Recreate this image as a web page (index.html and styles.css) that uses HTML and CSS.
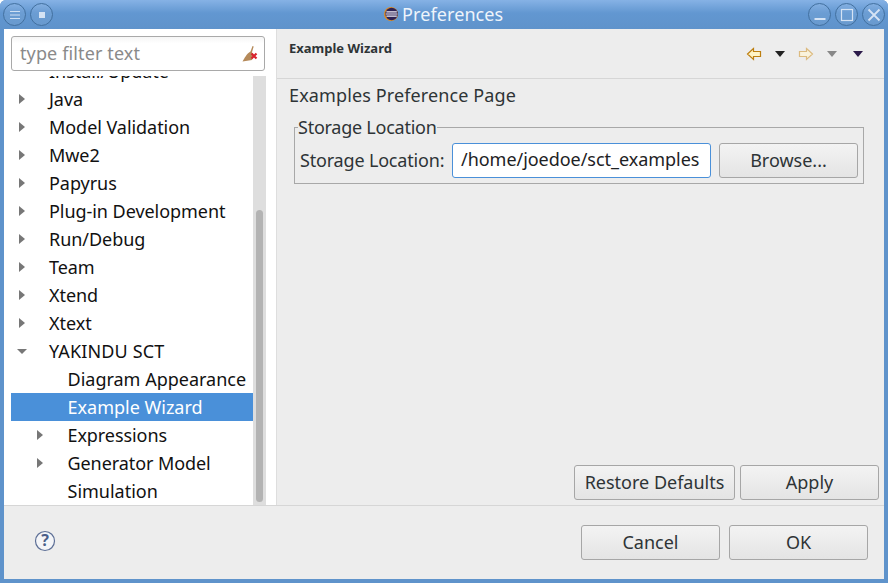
FILE: index.html
```html
<!DOCTYPE html>
<html lang="en">
<head>
<meta charset="utf-8">
<title>Preferences</title>
<link rel="stylesheet" href="styles.css">
</head>
<body>
<div class="window">
  <header class="titlebar">
    <div class="wm-group">
      <span class="wm-btn"><svg width="14" height="12" viewBox="0 0 14 12"><path d="M2 2.5h10M2 6h10M2 9.500h10" stroke="#cfe0f3" stroke-width="1.200" fill="none"/></svg></span>
      <span class="wm-btn"><svg width="14" height="14" viewBox="0 0 14 14"><rect x="4" y="4" width="6" height="6" fill="#d5e3f4"/></svg></span>
    </div>
    <div class="title">
      <svg class="eclipse" width="14" height="14" viewBox="0 0 14 14"><circle cx="7" cy="7" r="7" fill="#e08a1e"/><circle cx="7.600" cy="7" r="6.200" fill="#2c2255"/><path d="M2.400 4.800h10.400M1.800 7h11.600M2.400 9.200h10.400" stroke="#f2f0f7" stroke-width="1.200"/></svg>
      <span>Preferences</span>
    </div>
    <div class="wm-group">
      <span class="wm-btn"><svg width="14" height="14" viewBox="0 0 14 14"><path d="M1.500 11h11" stroke="#d5e3f4" stroke-width="2"/></svg></span>
      <span class="wm-btn"><svg width="14" height="14" viewBox="0 0 14 14"><rect x="1.500" y="1.500" width="11" height="11" fill="none" stroke="#d5e3f4" stroke-width="1.200"/></svg></span>
      <span class="wm-btn"><svg width="14" height="14" viewBox="0 0 14 14"><path d="M1.500 1.500l11 11M12.500 1.500l-11 11" stroke="#d5e3f4" stroke-width="1.800"/></svg></span>
    </div>
  </header>
  <div class="body">
    <div class="main">
      <aside class="left">
        <div class="filter">
          <span class="filter-text">type filter text</span>
          <svg class="broom" width="18" height="18" viewBox="0 0 18 18"><path d="M11.500 1l1.200.5-1.800 6 1.600 1.500-1.500 6-9.500 1.500c2-3 4-8 8-10z" fill="#b58a5a"/><path d="M10.500 8.500l5 5M15.500 8.500l-5 5" stroke="#d9232e" stroke-width="2.200"/></svg>
        </div>
        <div class="tree-wrap">
          <ul class="tree">
            <li class="row"><span class="lvl1 twist closed"></span><span>Install/Update</span></li>
            <li class="row"><span class="lvl1 twist closed"></span><span>Java</span></li>
            <li class="row"><span class="lvl1 twist closed"></span><span>Model Validation</span></li>
            <li class="row"><span class="lvl1 twist closed"></span><span>Mwe2</span></li>
            <li class="row"><span class="lvl1 twist closed"></span><span>Papyrus</span></li>
            <li class="row"><span class="lvl1 twist closed"></span><span>Plug-in Development</span></li>
            <li class="row"><span class="lvl1 twist closed"></span><span>Run/Debug</span></li>
            <li class="row"><span class="lvl1 twist closed"></span><span>Team</span></li>
            <li class="row"><span class="lvl1 twist closed"></span><span>Xtend</span></li>
            <li class="row"><span class="lvl1 twist closed"></span><span>Xtext</span></li>
            <li class="row"><span class="lvl1 twist open"></span><span>YAKINDU SCT</span></li>
            <li class="row"><span class="lvl2 twist"></span><span>Diagram Appearance</span></li>
            <li class="row selected"><span class="lvl2 twist"></span><span>Example Wizard</span></li>
            <li class="row"><span class="lvl2 twist closed"></span><span>Expressions</span></li>
            <li class="row"><span class="lvl2 twist closed"></span><span>Generator Model</span></li>
            <li class="row"><span class="lvl2 twist"></span><span>Simulation</span></li>
          </ul>
          <div class="scrollbar"><div class="thumb"></div></div>
        </div>
      </aside>
      <section class="right">
        <div class="page-head">
          <span class="page-title">Example Wizard</span>
          <div class="nav">
            <svg width="16" height="14" viewBox="0 0 16 14"><path d="M7.500 1.500L1.500 7l6 5.500V9.500h7v-5h-7z" fill="#fff3c4" stroke="#bd7f10" stroke-width="1.200"/></svg>
            <span class="tri dark nav-gap1"></span>
            <svg class="nav-gap2" width="16" height="14" viewBox="0 0 16 14"><path d="M8.500 1.500L14.500 7l-6 5.500V9.500h-7v-5h7z" fill="#faf3dc" stroke="#dcbb80" stroke-width="1.200"/></svg>
            <span class="tri grey nav-gap3"></span>
            <span class="tri purple nav-gap4"></span>
          </div>
        </div>
        <div class="page-body">
          <h1 class="page-heading">Examples Preference Page</h1>
          <fieldset class="group">
            <legend>Storage Location</legend>
            <div class="field-row">
              <label class="field-label">Storage Location:</label>
              <div class="input">/home/joedoe/sct_examples</div>
              <button class="btn browse">Browse...</button>
            </div>
          </fieldset>
          <div class="page-actions">
            <button class="btn restore">Restore Defaults</button>
            <button class="btn apply">Apply</button>
          </div>
        </div>
      </section>
    </div>
    <footer class="footer">
      <svg class="help" width="22" height="22" viewBox="0 0 22 22"><circle cx="11" cy="11" r="9.500" fill="#f4f5f8" stroke="#5d6f96" stroke-width="1.200"/><text x="11" y="16" text-anchor="middle" class="help-q">?</text></svg>
      <div class="footer-btns">
        <button class="btn dialog">Cancel</button>
        <button class="btn dialog">OK</button>
      </div>
    </footer>
  </div>
</div>
</body>
</html>
```
FILE: styles.css
```css
* { box-sizing: border-box; }
html, body { margin: 0; padding: 0; background: #fff; }
body { width: 888px; height: 583px; overflow: hidden; font-family: "Noto Sans", "Open Sans", sans-serif; font-size: 18px; color: #2e3436; }
.window { width: 888px; height: 583px; background: #5f93cb; border-radius: 6px 6px 0 0; padding: 0 4px 4px; display: flex; flex-direction: column; }
.titlebar { height: 29px; margin: 0 -4px; padding: 3px 3px 0; flex: none; display: flex; justify-content: space-between; background: linear-gradient(#86b2e5, #6297d1 45%, #5f93cb); border-radius: 6px 6px 0 0; position: relative; }
.wm-group { display: flex; gap: 4px; }
.wm-btn { width: 23px; height: 23px; border-radius: 50%; border: 1px solid #42709f; background: rgba(255,255,255,.06); display: flex; align-items: center; justify-content: center; }
.title { position: absolute; left: 384px; top: 0; height: 27px; display: flex; align-items: center; gap: 4px; color: #eef4fb; font-size: 18px; letter-spacing: .1px; }
.eclipse { flex: none; }
.body { flex: 1; min-height: 0; background: #ededed; display: flex; flex-direction: column; }
.main { flex: 1; min-height: 0; display: flex; }
.left { width: 273px; flex: none; background: #fff; padding: 7px 0 0; display: flex; flex-direction: column; border-right: 1px solid #dedede; }
.filter { margin: 0 11px 0 7px; height: 35px; flex: none; border: 1px solid #a9a9a9; border-radius: 3px; background: linear-gradient(#f5f5f5, #fff 20%); padding: 0 0 2px 8px; display: flex; align-items: center; justify-content: space-between; color: #8a8a8a; }
.filter-text { letter-spacing: .12px; }
.broom { margin-right: 5px; margin-top: 2px; }
.tree-wrap { flex: 1; min-height: 0; margin-top: 5px; display: flex; overflow: hidden; }
.tree { list-style: none; margin: -19px 0 0 7px; padding: 0; width: 242px; flex: none; color: #111; }
.row { height: 28px; display: flex; align-items: center; line-height: 28px; white-space: nowrap; }
.row.selected { background: #4a90d9; color: #fff; }
.twist { flex: none; display: block; width: 0; height: 0; }
.lvl2 { margin-right: 56.500px; }
.twist.closed { border-left: 6px solid #777; border-top: 5px solid transparent; border-bottom: 5px solid transparent; }
.lvl1.closed { margin-left: 8px; margin-right: 24px; }
.lvl2.closed { margin-left: 26px; margin-right: 24.500px; }
.lvl1.open { border-top: 5px solid #777; border-left: 5px solid transparent; border-right: 5px solid transparent; margin-left: 6px; margin-right: 22px; }
.lvl1.closed + span { letter-spacing: -.05px; }
.lvl2.closed + span { letter-spacing: -.08px; }
.lvl1.open + span { letter-spacing: .15px; }
.scrollbar { width: 23px; flex: none; background: linear-gradient(90deg, #dedede 13px, #fff 13px); padding-left: 3px; padding-top: 134px; }
.thumb { width: 7px; height: 292px; background: #b3b3b3; border-radius: 4px; }
.right { flex: 1; min-width: 0; display: flex; flex-direction: column; }
.page-head { height: 50px; flex: none; border-bottom: 1px solid #d6d6d6; display: flex; justify-content: space-between; padding: 10px 0 0 12px; }
.page-title { font-size: 13px; font-weight: 700; line-height: 18px; color: #2e3436; }
.nav { display: flex; align-items: center; height: 30px; padding-right: 21px; }
.tri { width: 0; height: 0; border-left: 5px solid transparent; border-right: 5px solid transparent; border-top: 6px solid; display: block; }
.tri.dark { border-top-color: #222; }
.tri.grey { border-top-color: #888; }
.tri.purple { border-top-color: #2c1a4a; }
.nav-gap1 { margin-left: 13px; }
.nav-gap2 { margin-left: 13px; }
.nav-gap3 { margin-left: 13px; }
.nav-gap4 { margin-left: 16px; }
.page-body { flex: 1; min-height: 0; display: flex; flex-direction: column; padding: 3px 5px 5px 12px; }
.page-heading { margin: 0; font-size: 18px; font-weight: 400; line-height: 26px; color: #2e3436; letter-spacing: .12px; }
.group { margin: 9px 15px 0 5px; padding: 0 4px 0 3px; height: 67px; border: 1px solid #a8a8a8; min-width: 0; }
.group legend { padding: 0; font-size: 18px; line-height: 20px; letter-spacing: -.25px; }
.field-row { display: flex; align-items: center; gap: 8px; height: 35px; margin: 6px 0 0 2px; }
.field-label { white-space: nowrap; width: 144px; flex: none; letter-spacing: -.18px; padding-bottom: 2px; }
.input { width: 259px; height: 35px; flex: none; border: 1px solid #4a90d9; border-radius: 3px; background: #fff; line-height: 31px; padding-left: 8px; color: #1e2224; white-space: nowrap; overflow: hidden; letter-spacing: -.04px; }
.btn { font: inherit; color: #2e3436; border: 1px solid #a6a6a6; border-radius: 3px; background: linear-gradient(#f3f3f3, #e4e4e4); padding: 0 0 2px; }
.browse { width: 139px; height: 35px; flex: none; }
.page-actions { margin-top: auto; display: flex; justify-content: flex-end; gap: 5px; }
.restore { width: 161px; height: 35px; }
.apply { width: 139px; height: 35px; }
.footer { height: 74px; flex: none; border-top: 1px solid #d6d6d6; display: flex; justify-content: space-between; align-items: center; padding: 0 16px 0 30px; }
.help { flex: none; margin-bottom: 3px; }
.help-q { font-size: 16px; font-weight: 700; fill: #4a5f8a; font-family: "Noto Sans", sans-serif; }
.footer-btns { display: flex; gap: 9px; }
.dialog { width: 139px; height: 35px; }
```
